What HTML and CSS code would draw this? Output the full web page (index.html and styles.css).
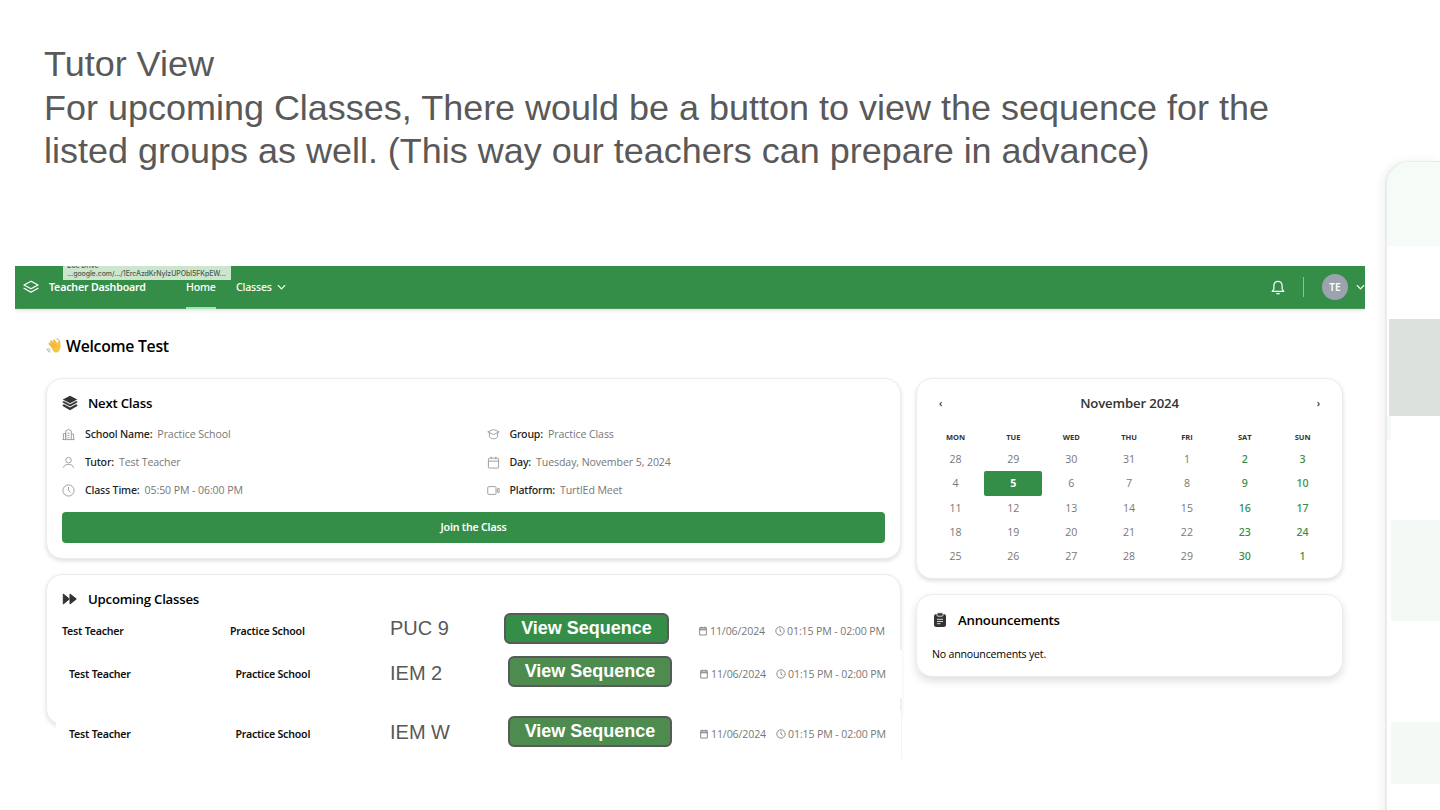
FILE: index.html
```
<!DOCTYPE html>
<html lang="en">
<head>
<meta charset="utf-8">
<title>Tutor View</title>
<link rel="stylesheet" href="styles.css">
</head>
<body>
<svg class="defs" width="0" height="0">
  <symbol id="cal" viewBox="0 0 12 12"><path d="M2 2h8v8.8H2zM2 4.6h8M2 3.6h8M4 .8v1.6M8 .8v1.6" fill="none" stroke="currentColor"/></symbol>
  <symbol id="clock" viewBox="0 0 12 12"><circle cx="6" cy="6" r="5" fill="none" stroke="currentColor"/><path d="M6 3v3.2l2 1.3" fill="none" stroke="currentColor"/></symbol>
</svg>
<div class="slide">
  <main class="main">
    <h1 class="title">Tutor View<br>For upcoming Classes, There would be a button to view the sequence for the<br>listed groups as well. (This way our teachers can prepare in advance)</h1>
    <div class="app">
      <nav class="nav">
        <svg class="logo" viewBox="0 0 16 14" fill="none" stroke="currentColor" stroke-width="1.3" stroke-linejoin="round" stroke-linecap="round"><path d="M8 1.2 15 5 8 8.8 1 5zM1 8.3l7 3.9 7-3.9"/></svg>
        <span class="brand">Teacher Dashboard</span>
        <a class="link active">Home</a>
        <a class="link classes">Classes</a>
        <svg class="chev" viewBox="0 0 8 6"><path d="M1 1.2l3 3 3-3" fill="none" stroke="currentColor" stroke-linecap="round"/></svg>
        <div class="nav-right">
          <svg class="bell" viewBox="0 0 14 15" fill="none" stroke="currentColor" stroke-width="1.2" stroke-linejoin="round" stroke-linecap="round"><path d="M1.2 11.400h11.600L11.100 9V5.400a4.100 4.100 0 0 0-8.200 0V9zM5.800 13.700h2.400"/></svg>
          <i class="divider"></i>
          <span class="avatar">TE</span>
          <svg class="chev" viewBox="0 0 8 6"><path d="M1 1.2l3 3 3-3" fill="none" stroke="currentColor" stroke-linecap="round"/></svg>
        </div>
        <div class="tip"><span>Zoe Drive</span><span>...google.com/.../1ErcAzdKrNyIzUPObl5FKpEW...</span></div>
      </nav>
      <h2 class="welcome">
        <svg class="wave" viewBox="0 0 16 16"><g fill="none" stroke="#f6bd3a" stroke-linecap="round" stroke-width="2.3"><path d="M3.6 5.6l5 5.4M5.2 3.4l5 6M8 2.7l4 5.3M13.1 4.1l.3 5"/></g><path d="M4.6 8.2l6.6-3.4 1.6 2.5 1-.4c1.200 3.500-.2 7-3.300 7.600-2 .3-3.300-.9-5.900-6.300z" fill="#f8c443"/><path d="M5.400 6.200l3.400 3.900M7.400 5l3 3.800" stroke="#d99428" stroke-width=".5"/><path d="M1 10.500c.3 1.800 1.400 3.200 3.100 3.900M2.700 10.400c.3 1.200 1 2 2 2.500M10.500.8c1.500.2 2.500.9 3.200 2" fill="none" stroke="#8b9095" stroke-width=".8"/></svg>
        <span>Welcome Test</span>
      </h2>
      <div class="columns">
        <div class="left">
          <section class="card next">
            <h3 class="head"><svg class="hicon" viewBox="0 0 16 16" fill="#333"><path d="M8 .8l7.300 3.700L8 8.200.7 4.500z"/><path d="M.7 6.400l1.500-.7L8 8.900l5.800-3.200 1.500.7v1.200L8 11.500.7 7.600zM.7 9.800l1.500-.7L8 12.300l5.800-3.200 1.500.7V11L8 15.200.7 11z"/><path d="M1 8.500l7 3.600 7-3.600M1 5.500l7 3.500 7-3.500" fill="none" stroke="#fff" stroke-width=".6"/></svg><span>Next Class</span></h3>
            <dl class="facts">
              <div><svg viewBox="0 0 14 14"><path d="M1.500 12.500V6H4v6.500M4 12.500V3l3-1.500 3 1.500v9.500M10 6.500h2.500v6M.5 12.500h13M6 5.500h2M6 8h2M6 10.500h2"/></svg><dt>School Name:</dt><dd>Practice School</dd></div>
              <div><svg viewBox="0 0 14 14"><path d="M.8 4.200L7 1.600l6.200 2.600L7 7zM2.600 5.200v4.200c2 3 6.800 3 8.800 0V5.200"/></svg><dt>Group:</dt><dd>Practice Class</dd></div>
              <div><svg viewBox="0 0 14 14"><circle cx="7" cy="4.500" r="3"/><path d="M1.500 12.500c.6-2.400 2.600-3.400 5.500-3.400s4.900 1 5.500 3.400"/></svg><dt>Tutor:</dt><dd>Test Teacher</dd></div>
              <div><svg viewBox="0 0 14 14"><rect x="1.500" y="2.300" width="11" height="10.700" rx="1"/><path d="M1.500 5.500h11M4.500.8v2.800M9.500.8v2.800"/></svg><dt>Day:</dt><dd>Tuesday, November 5, 2024</dd></div>
              <div><svg viewBox="0 0 14 14"><circle cx="7" cy="7" r="6"/><path d="M7 3.200V7l2.300 2.200"/></svg><dt>Class Time:</dt><dd>05:50 PM - 06:00 PM</dd></div>
              <div><svg viewBox="0 0 14 14"><rect x=".8" y="2.800" width="8.900" height="8.400" rx="1"/><path d="M11.200 5.300L13 4.600v4.800l-1.800-.7z"/></svg><dt>Platform:</dt><dd>TurtlEd Meet</dd></div>
            </dl>
            <button class="join">Join the Class</button>
          </section>
          <section class="card upcoming">
            <h3 class="head"><svg class="hicon" viewBox="0 0 16 16" fill="#333" stroke="#333" stroke-linejoin="round"><path d="M1.300 3l6 5-6 5zM8 3l6.300 5L8 13z"/></svg><span>Upcoming Classes</span></h3>
            <div class="row first"><b>Test Teacher</b><b>Practice School</b><span class="group">PUC 9</span><button class="view">View Sequence</button><div class="when"><svg><use href="#cal"/></svg><span class="date">11/06/2024</span><svg><use href="#clock"/></svg><span class="time">01:15 PM - 02:00 PM</span></div></div>
            <div class="row pasted second"><b>Test Teacher</b><b>Practice School</b><span class="group">IEM 2</span><button class="view">View Sequence</button><div class="when"><svg><use href="#cal"/></svg><span class="date">11/06/2024</span><svg><use href="#clock"/></svg><span class="time">01:15 PM - 02:00 PM</span></div></div>
            <div class="row pasted third"><b>Test Teacher</b><b>Practice School</b><span class="group">IEM W</span><button class="view">View Sequence</button><div class="when"><svg><use href="#cal"/></svg><span class="date">11/06/2024</span><svg><use href="#clock"/></svg><span class="time">01:15 PM - 02:00 PM</span></div></div>
          </section>
        </div>
        <div class="right">
          <section class="card calendar">
            <header class="month"><span class="arrow">‹</span><span>November 2024</span><span class="arrow">›</span></header>
            <div class="days">
              <b>MON</b><b>TUE</b><b>WED</b><b>THU</b><b>FRI</b><b>SAT</b><b>SUN</b>
              <span>28</span><span>29</span><span>30</span><span>31</span><span>1</span><span class="we">2</span><span class="we">3</span>
              <span>4</span><span class="today">5</span><span>6</span><span>7</span><span>8</span><span class="we">9</span><span class="we">10</span>
              <span>11</span><span>12</span><span>13</span><span>14</span><span>15</span><span class="we">16</span><span class="we">17</span>
              <span>18</span><span>19</span><span>20</span><span>21</span><span>22</span><span class="we">23</span><span class="we">24</span>
              <span>25</span><span>26</span><span>27</span><span>28</span><span>29</span><span class="we">30</span><span class="we">1</span>
            </div>
          </section>
          <section class="card news">
            <h3 class="head"><svg class="hicon" viewBox="0 0 16 16"><rect x="2" y="2" width="12" height="13" rx="2.500" fill="#333"/><rect x="5" y=".8" width="6" height="3.400" rx="1" fill="#333" stroke="#fff" stroke-width=".8"/><path d="M5 7.300h6M5 9.500h6M5 11.700h3.500" stroke="#fff" stroke-width=".8"/></svg><span>Announcements</span></h3>
            <p>No announcements yet.</p>
          </section>
        </div>
      </div>
    </div>
  </main>
  <aside class="peek">
    <div class="band top"></div>
    <div class="band grey"></div>
    <div class="band sliver"></div>
    <div class="band mid"></div>
    <div class="band low"></div>
  </aside>
</div>
</body>
</html>
```
FILE: styles.css
```
* { box-sizing: border-box; }
body { margin: 0; background: #fff; font-family: "Open Sans", "Noto Sans", sans-serif; color: #000; }
h1, h2, h3, dl, dd, p { margin: 0; }
button { border: 0; padding: 0; }
.defs { display: none; }
.slide { display: flex; width: 1440px; height: 810px; overflow: hidden; }
.main { width: 1385px; flex: none; }
.title { height: 266px; padding: 42px 0 0 44px; font: 400 35.98px/43.5px "Liberation Sans", sans-serif; color: #595959; white-space: nowrap; }
.app { width: 1350px; height: 500px; margin-left: 15px; overflow: hidden; }

.nav { position: relative; display: flex; align-items: center; height: 43px; padding-left: 8px; background: #358e47; color: #fff; font-size: 10.6px; font-weight: 500; box-shadow: 0 1px 4px rgba(0,0,0,.16); border-bottom: 1px solid #4b9a5b; }
.logo { width: 16px; height: 14px; }
.brand { width: 137px; margin-left: 10px; font-family: "Noto Sans", sans-serif; font-weight: 600; letter-spacing: -.17px; }
.link { height: 43px; line-height: 42px; font-family: "Noto Sans", sans-serif; letter-spacing: -.2px; }
.link.active { width: 30px; border-bottom: 2px solid #a5e5b4; }
.classes { width: 41px; margin-left: 20px; }
.chev { width: 9px; height: 7px; }
.nav-right { display: flex; align-items: center; margin-left: auto; }
.bell { width: 14px; height: 15px; }
.divider { width: 1px; height: 20px; margin: 0 18px; background: #93bd9a; }
.avatar { width: 26px; height: 26px; margin-right: 8px; border-radius: 50%; background: #9ca3af; font: 600 10px/26px "Noto Sans", sans-serif; text-align: center; }
.tip { position: absolute; left: 48px; top: 0; width: 168px; height: 14px; overflow: hidden; background: #cce6cd; color: #4c5b4f; font: 500 7px/8px Inter, sans-serif; letter-spacing: -.08px; display: flex; flex-direction: column; justify-content: flex-end; padding: 0 0 2px 4px; white-space: nowrap; }

.welcome { display: flex; align-items: center; gap: 4px; height: 69px; padding: 5px 0 0 31px; font-size: 15.8px; font-weight: 600; letter-spacing: -.28px; }
.wave { width: 16px; height: 16px; }
.columns { display: flex; gap: 15.5px; padding-left: 31px; }
.left { width: 854.5px; display: grid; grid-template-columns: minmax(0, 1fr); gap: 15px; }
.right { width: 427px; display: flex; flex-direction: column; gap: 16px; }
.card { border: 1px solid #ececec; border-radius: 16px; background: #fff; box-shadow: 0 2px 4px rgba(0,0,0,.13); }
.head { display: flex; align-items: center; gap: 10px; height: 20px; font-size: 13.200px; font-weight: 600; letter-spacing: -.22px; }
.hicon { width: 16px; height: 16px; }

.next { height: 181px; padding: 14px 15px 0; }
.facts { display: grid; grid-template-columns: 424.500px 1fr; grid-auto-rows: 28.200px; height: 99px; padding-top: 7px; font-size: 10.600px; }
.facts div { display: flex; align-items: center; }
.facts svg { width: 13px; height: 13px; margin-right: 10px; fill: none; stroke: #999; }
.facts dt { margin-right: 5px; color: #222; font-family: "Noto Sans", sans-serif; font-weight: 500; line-height: 14px; letter-spacing: -.18px; }
.facts dd { color: #777; letter-spacing: -.1px; line-height: 14px; }
.join { display: block; width: 823px; height: 31px; border-radius: 4px; background: #358e47; color: #fff; font: 600 10.600px/29px "Noto Sans", sans-serif; letter-spacing: -.2px; }

.upcoming { height: 151px; padding: 14px 0 0 15px; }
.row { display: grid; align-items: center; font-size: 10.600px; white-space: nowrap; }
.row b { font-family: "Noto Sans", sans-serif; font-weight: 600; color: #111; letter-spacing: -.22px; line-height: 14px; }
.first { grid-template-columns: 168px 160px 114px 165px 1fr; width: 823px; height: 44px; }
.pasted { width: 846px; margin-left: -6px; padding: 0 16px 0 13px; grid-template-columns: 166.500px 154.500px 118px 164px 1fr; background: #fff; }
.second { height: 48px; margin-top: -3px; }
.third { height: 49px; margin-top: 12px; border-right: 1px solid #f3f3f3; padding-right: 15px; padding-bottom: 2px; }
.group { font: 20px "Liberation Sans", sans-serif; color: #595959; margin-top: -5px; }
.view { height: 31px; margin-top: -5px; border: 2px solid #595959; border-radius: 6px; background: #358e47; color: #fff; font: 700 18px "Liberation Sans", sans-serif; }
.pasted .view { background: #4d8c4e; }
.pasted .group { margin-top: -2px; }
.when { display: flex; align-items: center; justify-content: flex-end; color: #777; letter-spacing: -.12px; }
.when svg { width: 10px; height: 10px; margin-right: 2px; }
.date { margin-right: 10px; }

.calendar { height: 201px; padding: 12px 10px 0; }
.month { display: flex; justify-content: space-between; height: 24px; padding: 0 12px; align-items: center; font-size: 13.200px; font-weight: 600; letter-spacing: -.15px; color: #333; }
.arrow { font-size: 10px; }
.days { display: grid; grid-template-columns: repeat(7, 57.850px); grid-template-rows: 20px repeat(5, 24.300px); padding-top: 12px; margin-left: -.4px; font-size: 10.600px; color: #777; text-align: center; }
.days b { font-size: 7.500px; line-height: 20px; color: #333; font-weight: 700; }
.days span { line-height: 24px; }
.days .we { color: #358e47; font-family: "Noto Sans", sans-serif; font-weight: 500; }
.days .today { border-radius: 2px; background: #358e47; color: #fff; font-weight: 700; }
.news { height: 83px; margin-top: -1px; padding: 15px; box-shadow: 0 4px 8px rgba(0,0,0,.13); }
.news p { margin-top: 15px; font-size: 10.600px; line-height: 18px; letter-spacing: -.19px; }

.peek { flex: 1; height: 700px; margin-top: 161px; overflow: hidden; border: 2px solid #ebebeb; border-right: 0; border-bottom: 0; border-top-width: 1px; border-radius: 24px 0 0 0; box-shadow: -3px 0 8px rgba(0,0,0,.06); }
.band { margin-left: 4px; background: #f3faf6; }
.top { height: 84px; margin-left: 0; background: #f5fbf6; }
.grey { height: 97px; margin: 73px 0 0 2px; background: #dde1de; }
.sliver { width: 4px; height: 24px; margin-left: 0; background: #f6faf7; }
.mid { height: 101px; margin-top: 80px; }
.low { height: 62px; margin-top: 101px; }
```
